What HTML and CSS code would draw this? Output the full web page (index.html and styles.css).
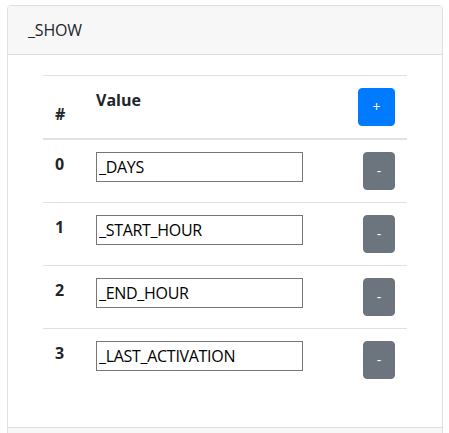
FILE: index.html
```html
<!DOCTYPE html>
<html>
<head>
<meta charset="utf-8">
<link rel="stylesheet" href="styles.css">
</head>
<body>
<div class="card">
  <div class="card-header">_SHOW</div>
  <div class="card-body">
    <div class="wrap">
      <table class="table">
        <thead>
          <tr>
            <th class="c-num">#</th>
            <th class="c-val">Value</th>
            <th class="c-act"><button class="btn btn-primary">+</button></th>
          </tr>
        </thead>
        <tbody>
          <tr>
            <td class="c-num">0</td>
            <td><input class="inp" type="text" value="_DAYS"></td>
            <td class="c-act"><button class="btn btn-secondary">-</button></td>
          </tr>
          <tr>
            <td class="c-num">1</td>
            <td><input class="inp" type="text" value="_START_HOUR"></td>
            <td class="c-act"><button class="btn btn-secondary">-</button></td>
          </tr>
          <tr>
            <td class="c-num">2</td>
            <td><input class="inp" type="text" value="_END_HOUR"></td>
            <td class="c-act"><button class="btn btn-secondary">-</button></td>
          </tr>
          <tr>
            <td class="c-num">3</td>
            <td><input class="inp" type="text" value="_LAST_ACTIVATION"></td>
            <td class="c-act"><button class="btn btn-secondary">-</button></td>
          </tr>
        </tbody>
      </table>
    </div>
  </div>
  <div class="card-footer"></div>
</div>
</body>
</html>
```
FILE: styles.css
```css
* { box-sizing: border-box; }
html, body { margin: 0; padding: 0; background: #fff; }
body {
  font-family: "Open Sans", "Noto Sans", sans-serif;
  font-size: 16px;
  line-height: 24px;
  color: #212529;
  padding: 5px 6px 0 7px;
}
.card {
  border: 1px solid #dfdfdf;
  border-radius: 4px;
  background: #fff;
}
.card-header {
  background: #f7f7f7;
  border-bottom: 1px solid #dfdfdf;
  padding: 12px 20px;
  border-radius: 3px 3px 0 0;
  letter-spacing: -0.2px;
}
.card-body { padding: 20px; }
.wrap { padding: 0 15px; }
.table {
  width: 100%;
  border-collapse: collapse;
  margin-bottom: 16px;
}
.table th, .table td {
  padding: 12px;
  border-top: 1px solid #dee2e6;
  text-align: left;
  vertical-align: top;
  font-weight: 700;
}
.table thead th {
  border-bottom: 2px solid #dee2e6;
}
.table thead th.c-num { vertical-align: bottom; }
.c-num { width: 41px; }
.c-act { text-align: right !important; width: 80px; }
.inp {
  width: 207px;
  height: 30px;
  border: 1px solid #767676;
  border-radius: 0;
  padding: 1px 2px;
  font-family: inherit;
  font-size: 16px;
  letter-spacing: -0.3px;
  color: #000;
  display: block;
  outline: none;
}
.btn {
  display: inline-block;
  height: 38px;
  border: 1px solid transparent;
  border-radius: 4px;
  padding: 0;
  font-family: inherit;
  font-size: 14px;
  line-height: 36px;
  color: #fff;
  vertical-align: top;
}
.btn-primary { background: #007bff; border-color: #007bff; width: 37px; }
.btn-secondary { background: #6c757d; border-color: #6c757d; width: 32px; }
.card-footer {
  border-top: 1px solid #dfdfdf;
  background: #f7f7f7;
  height: 20px;
}
```
